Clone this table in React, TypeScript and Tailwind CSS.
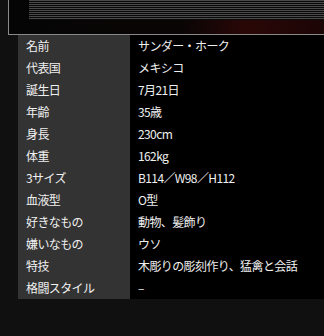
const rows: [string, string][] = [
  ["名前", "サンダー・ホーク"],
  ["代表国", "メキシコ"],
  ["誕生日", "7月21日"],
  ["年齢", "35歳"],
  ["身長", "230cm"],
  ["体重", "162kg"],
  ["3サイズ", "B114／W98／H112"],
  ["血液型", "O型"],
  ["好きなもの", "動物、髪飾り"],
  ["嫌いなもの", "ウソ"],
  ["特技", "木彫りの彫刻作り、猛禽と会話"],
  ["格闘スタイル", "–"],
]

export default function App() {
  return (
    <div
      className="w-[324px] h-[336px] overflow-hidden bg-[#101010] text-[12px] tracking-[-0.6px] text-[#f0f0f0]"
      style={{ fontFamily: '"Noto Sans CJK JP", "Liberation Sans", sans-serif' }}>
      {/* top frame */}
      <div className="h-[35px] ml-[8px] border-l border-b border-[#8a8a8a] bg-[#050505] flex flex-col">
        <div className="h-[20px] ml-[20px] bg-[repeating-linear-gradient(to_bottom,#4a4a4a_0px,#4a4a4a_1px,#0a0a0a_1px,#0a0a0a_2px)]" />
        <div className="flex-1 bg-[linear-gradient(to_right,#050505_0%,#0a0505_55%,#2a0707_75%,#1c0505_100%)]" />
      </div>

      {/* profile table */}
      <div className="ml-[18px] flex flex-col">
        {rows.map(([k, v]) => (
          <div key={k} className="flex h-[22px] leading-[22px]">
            <div className="w-[112px] bg-[#333333] pl-[8px] whitespace-nowrap">{k}</div>
            <div className="flex-1 bg-black pl-[8px] whitespace-nowrap">{v}</div>
          </div>
        ))}
      </div>
    </div>
  )
}
